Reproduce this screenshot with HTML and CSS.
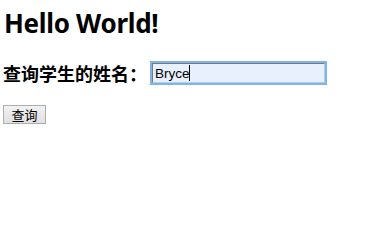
FILE: index.html
```html
<!DOCTYPE html>
<html lang="zh">
<head>
  <meta charset="UTF-8" />
  <title>Hello World</title>
  <link rel="stylesheet" href="styles.css">
</head>
<body>
  <h2 class="title">Hello World!</h2>

  <!-- search form -->
  <div class="search-row">
    <span class="label">查询学生的姓名：</span>
    <span class="input-wrap">
      <input class="name-input" type="text" value="Bryce">
      <span class="caret"></span>
    </span>
  </div>
  <button class="btn">查询</button>
</body>
</html>
```

FILE: styles.css
```css
* {
  box-sizing: border-box;
}

body {
  margin: 0;
  padding: 0 3px;
  background: #fff;
  color: #000;
  font-family: "Noto Sans", "Noto Sans CJK SC", sans-serif;
}

.title {
  font-size: 26px;
  font-weight: bold;
  margin: 0;
  padding: 6px 0 0 1px;
  line-height: 34px;
  letter-spacing: -0.3px;
}

.search-row {
  display: flex;
  align-items: center;
  margin-top: 21px;
  height: 24px;
}

.label {
  font-family: "Noto Sans CJK SC", sans-serif;
  font-size: 18px;
  font-weight: bold;
  line-height: 24px;
  width: 149px;
  flex: none;
}

.input-wrap {
  position: relative;
  display: block;
}

.name-input {
  display: block;
  width: 173px;
  height: 20px;
  padding: 0 2px;
  font-family: "Liberation Sans", Arial, sans-serif;
  font-size: 13.5px;
  color: #000;
  background: #e8f0fd;
  border: 1px solid #7a7a7a;
  border-bottom-color: #b5cde8;
  border-right-color: #b5cde8;
  box-shadow: 0 0 0 2px #7eb4ea;
  outline: none;
}

.caret {
  position: absolute;
  left: 37px;
  top: 2px;
  width: 1px;
  height: 16px;
  background: #000;
}

.btn {
  display: block;
  margin-top: 20px;
  width: 43px;
  height: 19px;
  padding: 0;
  font-family: "Noto Sans CJK SC", sans-serif;
  font-size: 13px;
  line-height: 17px;
  color: #000;
  background: linear-gradient(#f2f2f2, #e0e0e0);
  border: 1px solid #adadad;
  border-radius: 0;
}
```
